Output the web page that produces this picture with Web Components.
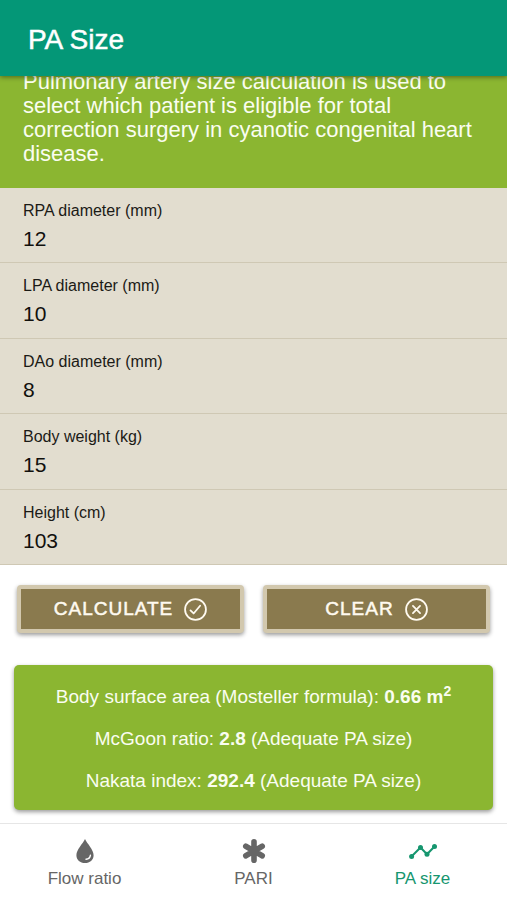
<!DOCTYPE html>
<html lang="en">
<head>
<meta charset="utf-8">
<meta name="viewport" content="width=device-width, initial-scale=1">
<title>PA Size</title>
<style>
  body { margin: 0; font-family: "Liberation Sans", Arial, sans-serif; }
</style>
</head>
<body>
<pa-app></pa-app>
<script>
const define = (name, html, setup) => {
  const template = document.createElement('template');
  template.innerHTML = html;
  customElements.define(name, class extends HTMLElement {
    constructor() {
      super();
      this.attachShadow({ mode: 'open' }).append(template.content.cloneNode(true));
    }
    connectedCallback() { if (setup) setup(this, this.shadowRoot); }
  });
};

define('app-header', `
<style>
  :host { display: block; position: relative; z-index: 1; background: #049777; color: #fff; box-shadow: 0 1px 5px rgba(0,0,0,.45); }
  h1 { margin: 0; padding: 24px 28px 20px; font-size: 28px; line-height: 32px; font-weight: 400; -webkit-text-stroke: 0.5px currentColor; }
</style>
<h1><slot></slot></h1>`);

define('intro-panel', `
<style>
  :host { display: block; background: #8bb631; color: #fafdf0; }
  p { margin: 0; padding: 22px 23px; font-size: 22px; line-height: 24px; }
</style>
<p><slot></slot></p>`);

define('number-field', `
<style>
  :host { display: block; box-sizing: border-box; padding: 15px 23px 11px; border-bottom: 1px solid #cfc8b4; background: #e2ddcf; color: #1b1a16; }
  label { display: block; overflow: hidden; font-size: 16px; line-height: 16px; margin-bottom: 8px; }
  input { display: block; width: 100%; box-sizing: border-box; height: 24px; margin: 0; padding: 0; border: 0; outline: 0; background: none; color: #11100d; font: 21px/24px "Liberation Sans", Arial, sans-serif; }
</style>
<label for="field"></label><input id="field" type="text" inputmode="decimal">`,
(host, root) => {
  root.querySelector('label').textContent = host.getAttribute('label');
  root.querySelector('input').value = host.getAttribute('value');
});

define('action-button', `
<style>
  :host { display: block; }
  button { display: flex; width: 100%; height: 48px; box-sizing: border-box; align-items: center; justify-content: center; gap: 11px; margin: 0; padding: 0; border: 4px solid #d2c8ae; border-radius: 4px; background: #8a7a4e; color: #fffaf0; box-shadow: 0 2px 4px rgba(0,0,0,.4); font: 19px/24px "Liberation Sans", Arial, sans-serif; letter-spacing: 1px; -webkit-text-stroke: 0.5px currentColor; text-transform: uppercase; }
  ::slotted(svg) { width: 23px; height: 23px; fill: none; stroke: currentColor; stroke-width: 1.7; stroke-linecap: round; stroke-linejoin: round; }
</style>
<button type="button"><slot></slot><slot name="icon"></slot></button>`);

define('result-card', `
<style>
  :host { display: flex; flex-direction: column; gap: 20px; padding: 21px 14px 18px; border-radius: 5px; background: #8bb631; color: #fafdf0; box-shadow: 0 2px 4px rgba(0,0,0,.4); text-align: center; font-size: 19px; line-height: 22px; }
</style>
<slot></slot>`);

define('tab-item', `
<style>
  :host { display: block; flex: 1; color: #666; }
  :host([selected]) { color: #16966f; }
  a { display: flex; flex-direction: column; align-items: center; gap: 4px; padding: 13px 4px 11px; color: inherit; text-decoration: none; font-size: 17px; line-height: 20px; }
  ::slotted(svg) { width: 28px; height: 28px; }
</style>
<a href="#"><slot name="icon"></slot><span><slot></slot></span></a>`);

define('tab-bar', `
<style>
  :host { display: flex; border-top: 1px solid #e6e6e6; background: #fff; }
</style>
<slot></slot>`);

define('pa-app', `
<style>
  :host { display: flex; flex-direction: column; height: 100vh; background: #fff; }
  main { flex: 1; min-height: 0; overflow: hidden; display: flex; flex-direction: column; justify-content: flex-end; }
  main > * { flex: none; }
  .fields { display: grid; min-height: 377px; }
  .actions { display: grid; grid-template-columns: 1fr 1fr; gap: 19px; padding: 20px 17px 32px; }
  result-card { margin: 0 14px 13px; }
  p { margin: 0; }
  sup { font-size: 14px; line-height: 0; vertical-align: 7px; }
</style>
<app-header>PA Size</app-header>
<main>
  <intro-panel>Pulmonary artery size calculation is used to select which patient is eligible for total correction surgery in cyanotic congenital heart disease.</intro-panel>
  <div class="fields">
    <number-field label="RPA diameter (mm)" value="12"></number-field>
    <number-field label="LPA diameter (mm)" value="10"></number-field>
    <number-field label="DAo diameter (mm)" value="8"></number-field>
    <number-field label="Body weight (kg)" value="15"></number-field>
    <number-field label="Height (cm)" value="103"></number-field>
  </div>
  <div class="actions">
    <action-button>Calculate<svg slot="icon" viewBox="0 0 22 22" aria-hidden="true"><circle cx="11" cy="11" r="10"/><path d="M6.2 11.8l3 3L15.4 7.4"/></svg></action-button>
    <action-button>Clear<svg slot="icon" viewBox="0 0 22 22" aria-hidden="true"><circle cx="11" cy="11" r="10"/><path d="M7.6 7.6l6.8 6.8M14.4 7.6l-6.8 6.8"/></svg></action-button>
  </div>
  <result-card>
    <p>Body surface area (Mosteller formula): <b>0.66 m<sup>2</sup></b></p>
    <p>McGoon ratio: <b>2.8</b> (Adequate PA size)</p>
    <p>Nakata index: <b>292.4</b> (Adequate PA size)</p>
  </result-card>
</main>
<tab-bar>
  <tab-item>Flow ratio<svg slot="icon" viewBox="0 0 28 28" aria-hidden="true"><path fill="currentColor" d="M14 2C12 6.500 5.400 12.500 5.400 18.200C5.400 23 9.200 26 14 26S22.600 23 22.600 18.200C22.600 12.500 16 6.500 14 2Z"/><path d="M19.400 18.300C19.100 20.700 17.300 22 15 22.200" fill="none" stroke="#fff" stroke-width="1.400" stroke-linecap="round"/></svg></tab-item>
  <tab-item>PARI<svg slot="icon" viewBox="0 0 28 28" aria-hidden="true"><path d="M14 4.700V23.300M5.800 9.250L22.200 18.750M22.200 9.250L5.800 18.750" stroke="currentColor" stroke-width="5.600" stroke-linecap="round"/></svg></tab-item>
  <tab-item selected>PA size<svg slot="icon" viewBox="0 0 28 28" aria-hidden="true"><path d="M2.500 19.500L11.500 10.500L18 17.200L26 9" fill="none" stroke="currentColor" stroke-width="2"/><g fill="currentColor"><circle cx="2.600" cy="19.400" r="2.500"/><circle cx="11.500" cy="10.600" r="2.500"/><circle cx="18" cy="17.200" r="2.500"/><circle cx="25.500" cy="9.400" r="2.500"/></g></svg></tab-item>
</tab-bar>`);
</script>
</body>
</html>
